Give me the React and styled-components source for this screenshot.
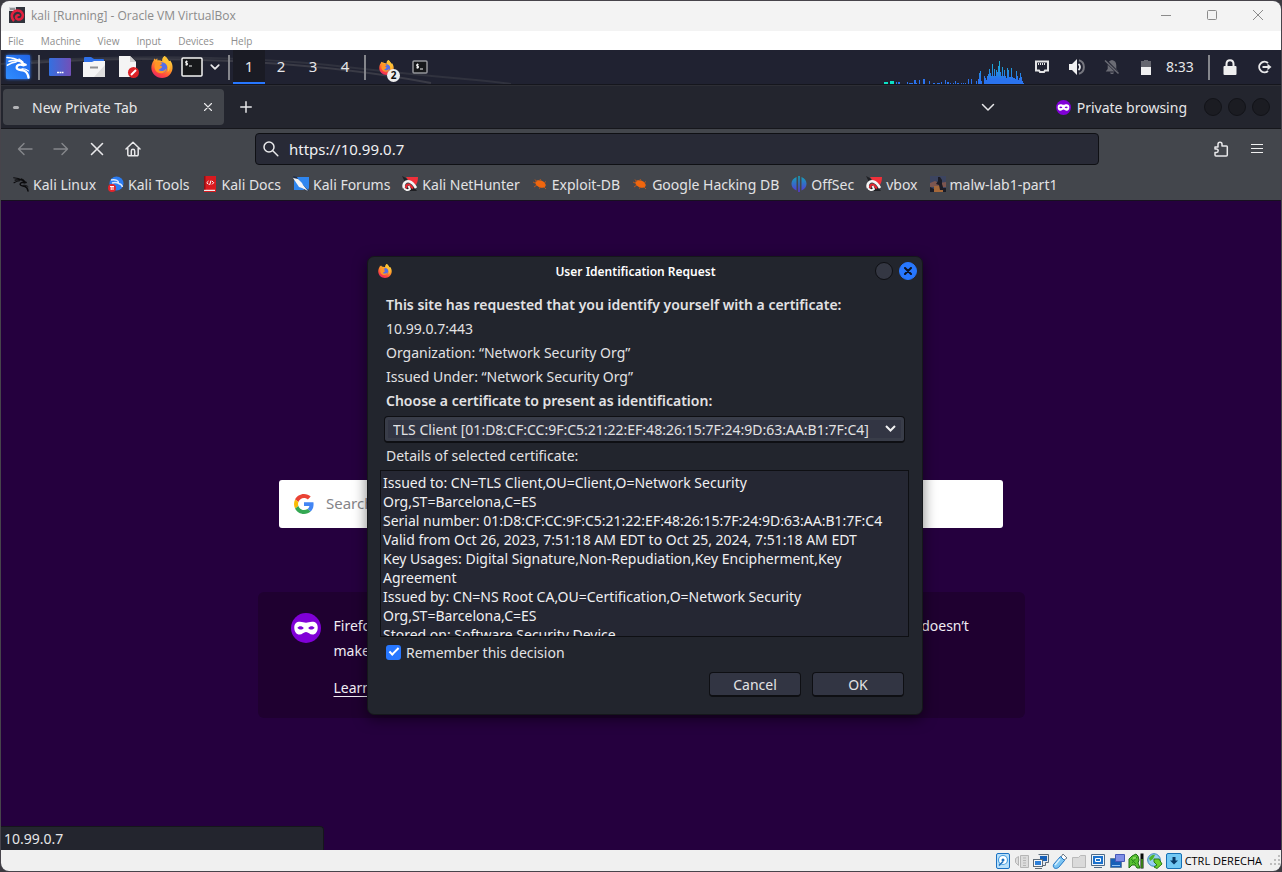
import React from "react";
import styled, { createGlobalStyle } from "styled-components";

const Global = createGlobalStyle`
  *, *::before, *::after { box-sizing: border-box; }
  html, body, #root { min-height: 100vh; }
  body {
    margin: 0;
    background: #3b3a40;
    font-family: "Noto Sans", "Open Sans", sans-serif;
    font-size: 14px;
    color: #e6e6e8;
  }
  button, input, select, textarea { font: inherit; color: inherit; margin: 0; padding: 0; border: 0; background: none; }
  svg { display: block; flex: none; }
`;

/* ---------- Host window ---------- */

const HostWindow = styled.div`
  display: flex;
  flex-direction: column;
  min-height: 100vh;
  border: 1px solid #47444b;
  border-radius: 9px;
  overflow: hidden;
  background: #222530;
`;

const HostTitle = styled.header`
  display: flex;
  align-items: center;
  height: 30px;
  padding: 0 0 2px 8px;
  background: #f3f3f3;
  color: #8b8b8b;
  font-family: "Open Sans", sans-serif;
  font-size: 12px;
`;

const HostName = styled.span`
  flex: 1;
  padding-left: 6px;
`;

const HostButton = styled.button`
  display: grid;
  place-items: center;
  width: 46px;
  height: 30px;
`;

const HostMenu = styled.nav`
  display: flex;
  align-items: center;
  gap: 17px;
  height: 19px;
  padding-left: 7px;
  background: #fff;
`;

const HostMenuItem = styled.button`
  color: #8e8e8e;
  font-family: "Open Sans", sans-serif;
  font-size: 10px;
  line-height: 16px;
`;

const HostStatus = styled.footer`
  display: flex;
  align-items: center;
  justify-content: flex-end;
  gap: 3px;
  height: 21px;
  background: #f0f0f0;
  color: #000;
  font-family: "Open Sans", sans-serif;
  font-size: 11px;
`;

const HostKey = styled.span`
  padding-right: 5px;
`;

/* ---------- Desktop panel ---------- */

const Panel = styled.div`
  position: relative;
  isolation: isolate;
  display: flex;
  align-items: center;
  height: 35px;
  background: #202231;
  border-bottom: 1px solid #15161d;
`;

const PanelArt = styled.svg`
  position: absolute;
  inset: 0;
  z-index: -1;
`;

const PanelSlot = styled.button`
  position: relative;
  display: grid;
  place-items: center;
  width: ${(p) => p.$w || 34}px;
  height: 34px;
`;

const Separator = styled.span`
  width: 2px;
  height: 25px;
  margin: 0 3px;
  background: #85868c;
`;

const Workspace = styled.button`
  width: 32px;
  height: 34px;
  font-size: 15px;
  background: ${(p) => (p.$active ? "#1a1b24" : "transparent")};
  border-bottom: 2px solid ${(p) => (p.$active ? "#2777ff" : "transparent")};
`;

const Count = styled.span`
  position: absolute;
  right: 3px;
  bottom: 2px;
  width: 13px;
  height: 13px;
  border-radius: 50%;
  background: #eee;
  color: #111;
  font-size: 10px;
  font-weight: 700;
  line-height: 13px;
  text-align: center;
`;

const Spring = styled.span`
  flex: 1;
`;

const Clock = styled.time`
  width: 42px;
  padding: 0 0 2px 3px;
`;

/* ---------- Browser ---------- */

const TabBar = styled.div`
  display: flex;
  align-items: center;
  height: 44px;
  padding: 0 11px 0 2px;
  background: #23252e;
  border-top: 1px solid #2d2e35;
  border-bottom: 1px solid #16171c;
`;

const Tab = styled.div`
  display: flex;
  align-items: center;
  width: 221px;
  height: 36px;
  padding: 0 9px 0 10px;
  border-radius: 4px;
  background: #42454b;
`;

const TabDot = styled.span`
  width: 6px;
  height: 3px;
  border-radius: 2px;
  background: #b3b4b7;
`;

const TabName = styled.span`
  flex: 1;
  padding-left: 13px;
`;

const IconButton = styled.button`
  display: grid;
  place-items: center;
  width: ${(p) => p.$w || 36}px;
  height: 36px;
  opacity: ${(p) => (p.disabled ? 0.4 : 1)};
`;

const PrivateBadge = styled.div`
  display: flex;
  align-items: center;
  gap: 6px;
  padding: 0 17px 0 50px;
`;

const RoundButtons = styled.div`
  display: flex;
  justify-content: flex-end;
  gap: 6px;
`;

const RoundButton = styled.button`
  display: grid;
  place-items: center;
  width: 18px;
  height: 18px;
  border-radius: 50%;
  border: 1px solid ${(p) => p.$border || "#121318"};
  background: ${(p) => p.$bg || "#1b1c22"};
`;

const NavBar = styled.div`
  display: flex;
  align-items: center;
  height: 41px;
  padding-bottom: 2px;
  background: #43464c;
`;

const NavLeft = styled.div`
  display: flex;
  width: 254px;
  padding-left: 6px;
`;

const NavRight = styled.div`
  display: flex;
  justify-content: flex-end;
  width: 182px;
  padding-right: 6px;
`;

const UrlBox = styled.label`
  display: flex;
  flex: 1;
  align-items: center;
  gap: 10px;
  height: 32px;
  padding: 0 7px;
  border: 1px solid #0f1014;
  border-radius: 4px;
  background: #282a36;
`;

const UrlInput = styled.input`
  flex: 1;
  min-width: 0;
  outline: 0;
  color: #f0f0f2;
  font-size: 15px;
`;

const Bookmarks = styled.nav`
  display: flex;
  align-items: center;
  gap: 12px;
  height: 31px;
  padding: 0 0 2px 12px;
  background: #43464c;
  border-bottom: 1px solid #17101f;
`;

const Bookmark = styled.a`
  display: flex;
  align-items: center;
  gap: 4px;
  color: #e2e2e4;
  text-decoration: none;
  white-space: nowrap;
`;

const Page = styled.main`
  position: relative;
  flex: 1;
  display: flex;
  flex-direction: column;
  align-items: center;
  gap: 64px;
  padding: 279px 24px 132px;
  background: #25003e;
`;

const SearchBox = styled.label`
  display: flex;
  align-items: center;
  gap: 12px;
  width: 100%;
  max-width: 724px;
  height: 48px;
  padding: 0 15px;
  border-radius: 3px;
  background: #fff;
`;

const SearchInput = styled.input`
  flex: 1;
  min-width: 0;
  padding-bottom: 2px;
  font-size: 15px;
  &::placeholder { color: #848488; opacity: 1; }
`;

const Info = styled.section`
  display: flex;
  gap: 13px;
  width: 100%;
  max-width: 767px;
  height: 126px;
  padding: 21px 38px 0 33px;
  border-radius: 6px;
  background: #1f0030;
  color: #f1edf4;
  line-height: 25px;
`;

const InfoText = styled.p`
  margin: 0 0 12px;
`;

const InfoLink = styled.a`
  color: inherit;
  text-underline-offset: 3px;
`;

const LinkStatus = styled.div`
  position: absolute;
  left: 0;
  bottom: 0;
  width: 323px;
  height: 24px;
  padding-left: 3px;
  border: 1px solid #15161b;
  border-width: 1px 1px 0 0;
  border-radius: 0 4px 0 0;
  background: #23252e;
  line-height: 24px;
`;

/* ---------- Certificate dialog ---------- */

const Dialog = styled.form`
  position: absolute;
  top: 55px;
  left: calc(50% - 273px);
  width: 556px;
  display: flex;
  flex-direction: column;
  margin-left: -1px;
  padding: 0 14px 17px 12px;
  border: 1px solid #15171b;
  border-radius: 7px;
  background: #22252d;
  box-shadow: 0 4px 14px rgba(0, 0, 0, 0.5);
  color: #e2e2e4;
`;

const DialogBar = styled.div`
  display: grid;
  grid-template-columns: 30px 1fr 54px;
  align-items: center;
  height: 28px;
  margin: 0 -9px 8px -2px;
`;

const DialogTitle = styled.h1`
  margin: 0;
  color: #fff;
  font-size: 12px;
  font-weight: 600;
  text-align: center;
`;

const Line = styled.div`
  padding-left: 6px;
  font-weight: ${(p) => (p.$strong ? 600 : 400)};
  line-height: 24px;
`;

const PickerWrap = styled.div`
  position: relative;
  margin: 3px 3px 1px 4px;
`;

const Picker = styled.select`
  display: block;
  width: 100%;
  height: 27px;
  padding: 0 24px 0 8px;
  border: 1px solid #0e0f13;
  border-bottom-width: 2px;
  border-radius: 4px;
  background: #323543;
  box-shadow: inset 0 0 0 3px #393d49;
  appearance: none;
`;

const PickerArrow = styled.svg`
  position: absolute;
  right: 9px;
  top: 9px;
  pointer-events: none;
`;

const Details = styled.textarea`
  display: block;
  height: 167px;
  margin: 2px -1px 0 0;
  padding: 2px 10px 0 2px;
  border: 1px solid #0e0f13;
  background: #252733;
  color: #f0f0f2;
  line-height: 19px;
  overflow: hidden;
  resize: none;
`;

const CheckRow = styled.label`
  display: flex;
  align-items: center;
  gap: 5px;
  height: 24px;
  margin: 3px 0 8px;
  padding-left: 6px;
`;

const Check = styled.input`
  width: 15px;
  height: 15px;
  border-radius: 3px;
  appearance: none;
  background: #2777ff;
  display: grid;
  place-items: center;
  &::after {
    content: "";
    width: 10px;
    height: 5px;
    border: solid #fff;
    border-width: 0 0 2px 2px;
    rotate: -45deg;
    margin-bottom: 3px;
  }
`;

const Actions = styled.div`
  display: flex;
  justify-content: flex-end;
  gap: 11px;
  padding-right: 4px;
`;

const ActionButton = styled.button`
  width: 92px;
  height: 25px;
  border: 1px solid #0e0f13;
  border-bottom-width: 2px;
  border-radius: 4px;
  background: #323543;
`;

/* ---------- Icons ---------- */

const Firefox = ({ size = 22 }) => (
  <svg width={size} height={size} viewBox="0 0 24 24">
    <defs>
      <linearGradient id={"ff" + size} x1="0.8" y1="0" x2="0.25" y2="1">
        <stop offset="0" stopColor="#ffe14a" />
        <stop offset="0.45" stopColor="#ff9a28" />
        <stop offset="0.75" stopColor="#ff4a3c" />
        <stop offset="1" stopColor="#e62368" />
      </linearGradient>
    </defs>
    <path fill={"url(#ff" + size + ")"} d="M14.7 0c3 1.700 3.600 3.700 4.800 5.200.9.700 1.200.3 1.500-.2 1.800 2.500 2.700 5 2.500 8.300C23.100 19.300 18.200 24 12 24 5.700 24 .5 19.400.4 12.900.4 9.800 1.300 7 3 4.800l.4-2.200 2 1.500 1.300-1.700.5 2.400c2.100-.4 3.800.1 5 .9C11.800 3.600 12.800 1.200 14.700 0z" />
    <circle cx="12" cy="12.500" r="5.700" fill="#536ee8" />
    <path fill="#ff9626" d="M5.200 7.200c2.300-1.500 5.400-.8 7 1.500l-2.800 1.500 2.800 1.300c-.3 2.300-2.900 2.500-3.900 3.900 2.500 2.100 6.500.8 8.500-1.900-.4 5.600-8.600 7.200-11.900 2.200C3.300 13 3.500 9.500 5.200 7.200z" />
    <path fill="#ffc233" d="M14.700 0c3 1.700 3.600 4.700 5.300 7.700 1.500 3 .8 7.300-1.800 9.900 1.200-4.500 0-7.900-2.600-9.900C13.500 6 13.100 3 14.700 0z" />
  </svg>
);

const Dragon = ({ color = "#fff", size = 24 }) => (
  <svg width={size} height={size} viewBox="0 0 24 24" fill="none" stroke={color} strokeLinecap="round" strokeLinejoin="round">
    <path strokeWidth="1.600" d="M1 2.500c4.500.3 8.500 1 11.500 3M3 6.200c3.400-.9 6.500-1.100 9.500-.3M1.500 10.200c2.800-2 5.500-3 8.500-3.200" />
    <path strokeWidth="2.300" d="M12 5.400c2.300.4 4 1.600 5.200 3.300l2.500 1-2.500.6c-3-1.600-6.700-.2-6.500 2.500.3 2.500 4.500 1.800 7.300 2.900 2.900 1.100 4 3.500 4.500 6.800" />
    <path strokeWidth="1.200" d="M16 13.800c2.600-.2 4.600.6 6.500 2.100M13 4l4 3" />
  </svg>
);

const KaliTile = () => (
  <svg width="30" height="30" viewBox="0 0 30 30">
    <defs>
      <linearGradient id="kt" x1="0" y1="1" x2="1" y2="0">
        <stop offset="0" stopColor="#2f8dff" />
        <stop offset="1" stopColor="#2165e8" />
      </linearGradient>
      <filter id="glow" x="-30%" y="-30%" width="160%" height="160%"><feGaussianBlur stdDeviation="1.500" /></filter>
    </defs>
    <rect x="3" y="3" width="24" height="24" rx="2" fill="#2777ff" filter="url(#glow)" />
    <rect x="3" y="3" width="24" height="24" rx="1" fill="url(#kt)" />
    <g transform="translate(3 3)"><Dragon /></g>
  </svg>
);

const Terminal = ({ w = 22, h = 20, border = "#f4f4f4" }) => (
  <svg width={w} height={h} viewBox={`0 0 ${w} ${h}`} fill="none">
    <rect x="1" y="1" width={w - 2} height={h - 2} rx="1" fill="#17181b" stroke={border} strokeWidth="1.500" />
    <path d="M6.500 4.500H4.700v1.700h1.800v1.600H4.300M5.600 3.500v5M8 9h3" stroke="#f4f4f4" />
  </svg>
);

const Mask = ({ size }) => (
  <svg width={size} height={size} viewBox="0 0 32 32">
    <circle cx="16" cy="16" r="16" fill="#8000d7" />
    <path fill="#fff" d="M3.500 15.500c0-4.200 2.200-6.200 6-6.200 2.800 0 4.500 1 6.500 1s3.700-1 6.500-1c3.800 0 6 2 6 6.200 0 4.500-2.200 7.500-5.600 7.500-3 0-4.300-2.800-6.900-2.800S12.100 23 9.100 23c-3.400 0-5.600-3-5.600-7.500z" />
    <path fill="#7d05d6" d="M6.800 15.700c1.600-2.300 5-2.300 6.800.3-1.600 2.300-5.400 2.100-6.800-.3zM25.200 15.700c-1.600-2.300-5-2.300-6.800.3 1.600 2.300 5.400 2.100 6.800-.3z" />
  </svg>
);

const Google = () => (
  <svg width="20" height="20" viewBox="0 0 48 48">
    <path fill="#EA4335" d="M24 9.500c3.540 0 6.710 1.220 9.210 3.600l6.850-6.850C35.900 2.380 30.470 0 24 0 14.620 0 6.510 5.380 2.560 13.220l7.980 6.190C12.430 13.720 17.740 9.500 24 9.500z" />
    <path fill="#4285F4" d="M46.980 24.550c0-1.570-.15-3.090-.38-4.550H24v9.020h12.940c-.58 2.960-2.260 5.480-4.780 7.180l7.730 6c4.510-4.180 7.090-10.360 7.090-17.650z" />
    <path fill="#FBBC05" d="M10.530 28.590c-.48-1.450-.76-2.990-.76-4.590s.27-3.140.76-4.590l-7.980-6.190C.92 16.460 0 20.120 0 24c0 3.880.92 7.540 2.560 10.780l7.970-6.190z" />
    <path fill="#34A853" d="M24 48c6.480 0 11.930-2.130 15.890-5.810l-7.730-6c-2.150 1.450-4.920 2.300-8.160 2.300-6.260 0-11.570-4.220-13.470-9.910l-7.980 6.190C6.510 42.620 14.620 48 24 48z" />
  </svg>
);

const Stroke = ({ size = 16, d, color = "#e8e8ea", sw = 1.5, children, ...rest }) => (
  <svg width={size} height={size} viewBox="0 0 16 16" fill="none" stroke={color} strokeWidth={sw} strokeLinecap="round" strokeLinejoin="round" {...rest}>
    {d && <path d={d} />}
    {children}
  </svg>
);

const NetHunter = () => (
  <svg width="16" height="16" viewBox="0 0 16 16">
    <path fill="#f0303a" d="M4 1h12c0 4-1 7-3 9L7 5z" />
    <path fill="#1f2024" d="M0 0l4 2 2 3-3 1zM1 12l2 3h8l4 0-3-4z" />
    <path fill="none" stroke="#f5f5f5" strokeWidth="2.600" d="M2 12c-1.500-4 1.500-7.500 5.500-6.500 3 .8 4.500 3 6.500 6.500" />
    <path fill="none" stroke="#e8262f" strokeWidth="2" d="M4.500 12.500c-1.500-3 1.500-5 3.500-3.500l3 3.500" />
    <path fill="none" stroke="#f5f5f5" strokeWidth="1.800" d="M2 12c1 2 4 3 6 1L6.500 10" />
  </svg>
);

const Bug = () => (
  <svg width="16" height="16" viewBox="0 0 16 16">
    <ellipse cx="8.500" cy="8" rx="5.500" ry="3.400" transform="rotate(22 8.500 8)" fill="#f0660e" />
    <path d="M5 6L3 3.500M9 5L8 3M3 7L1 6M5 9l-3 2M9 11l-2 1.500M12 7l2-1.500M12 11l2 2" stroke="#b9561c" strokeWidth="1" />
  </svg>
);

const bookmarks = [
  { name: "Kali Linux", icon: <Dragon color="#0c0c0e" size={16} /> },
  {
    name: "Kali Tools",
    icon: (
      <svg width="16" height="16" viewBox="0 0 16 16">
        <circle cx="8.500" cy="7.500" r="7" fill="#2b7cf2" />
        <path d="M3 4c5-1 8 1 7.500 3.500 2 .3 3.500 1.500 4 3.500M4 7c3-1 5-.5 6.500.5" stroke="#d8e6fb" strokeWidth="1.400" fill="none" />
        <circle cx="4" cy="12" r="4" fill="#e3242b" />
        <path d="M2 10.500h4M3.200 10.500v3.500M5 10.500v3.500" stroke="#fff" fill="none" />
      </svg>
    ),
  },
  {
    name: "Kali Docs",
    icon: (
      <svg width="16" height="16" viewBox="0 0 16 16">
        <path fill="#d91a1f" d="M2 0h12v16H2z" />
        <path fill="#f3e9e9" d="M2 13.800h11v1.200H2z" />
        <path fill="#8d1115" d="M2 0h1.500v13.500H2z" />
        <path d="M6.500 5L4.800 6.700 6.500 8.400M10 5l1.700 1.700L10 8.400M9 4.500L7.600 9" stroke="#fff" fill="none" />
      </svg>
    ),
  },
  {
    name: "Kali Forums",
    icon: (
      <svg width="16" height="16" viewBox="0 0 16 16">
        <path fill="#2f86ef" d="M2 1h14v11l-1 2H1V6z" />
        <path fill="#1c2c4a" d="M0 0l4 1 2 4-3 1zM10 9l6 6-5-1z" />
        <path fill="#f2f4f7" d="M0 2l5 1 4 4 1 2 5 6-6-3-3-1-2-3z" />
      </svg>
    ),
  },
  { name: "Kali NetHunter", icon: <NetHunter /> },
  { name: "Exploit-DB", icon: <Bug /> },
  { name: "Google Hacking DB", icon: <Bug /> },
  {
    name: "OffSec",
    icon: (
      <svg width="16" height="16" viewBox="0 0 16 16">
        <defs>
          <linearGradient id="os" x1="0" y1="0" x2="0" y2="1">
            <stop offset="0" stopColor="#12a5b8" />
            <stop offset="1" stopColor="#5636d8" />
          </linearGradient>
        </defs>
        <path fill="url(#os)" d="M5.500 1v13.500C-1.200 12-1.200 3.500 5.500 1zM7.200 0h1.600v16H7.200zM10.500 1v13.500C17.200 12 17.200 3.500 10.500 1z" />
      </svg>
    ),
  },
  { name: "vbox", icon: <NetHunter /> },
  {
    name: "malw-lab1-part1",
    icon: (
      <svg width="16" height="16" viewBox="0 0 16 16">
        <path fill="#3c4460" d="M0 0h16v16H0z" />
        <path fill="#7d5650" d="M0 7l5-2 4 2 7-1v5H0z" />
        <path fill="#a5683a" d="M4 10h9v6H4z" />
        <path fill="#1c1c26" d="M8 1h2l2 3v4l1 3v3h-3l-1-5-3-1 2-3zM0 11l4 2v3H0zM13 12h3v4h-3z" />
      </svg>
    ),
  },
];

const activity = [
  [0, 2], [1, 2], [2, 2], [3, 2], [6, 3], [7, 3], [8, 3], [9, 3], [12, 2], [14, 2], [15, 2], [23, 2], [25, 1], [26, 1], [27, 1], [28, 1],
  [30, 4], [31, 4], [32, 1], [35, 4], [39, 5], [40, 5], [45, 3], [49, 1], [50, 1], [53, 1], [54, 1], [55, 1], [57, 2], [61, 4], [63, 2], [64, 2],
  [66, 1], [69, 1], [71, 3], [73, 1], [74, 1], [77, 1], [79, 1], [81, 1], [84, 5], [87, 5], [92, 3], [94, 5], [95, 11], [96, 13], [97, 3],
  [100, 8], [101, 6], [102, 4], [103, 8], [104, 10], [105, 15], [106, 11], [107, 8], [108, 20], [109, 8], [110, 15], [111, 8], [112, 14], [113, 12],
  [114, 18], [115, 23], [116, 12], [117, 8], [118, 17], [119, 8], [120, 14], [121, 8], [122, 6], [123, 16], [124, 14], [125, 7], [126, 7], [127, 16],
  [128, 7], [129, 6], [130, 6], [131, 5], [132, 13], [133, 8], [134, 4], [135, 6], [136, 11], [137, 7], [138, 3], [139, 1],
];

const Activity = () => (
  <svg width="140" height="34" viewBox="0 0 140 34" shapeRendering="crispEdges">
    <defs>
      <linearGradient id="act" gradientUnits="userSpaceOnUse" x1="0" y1="34" x2="0" y2="11">
        <stop offset="0.200" stopColor="#2a73ee" />
        <stop offset="1" stopColor="#17b5cf" />
      </linearGradient>
    </defs>
    {activity.map(([x, h]) => (
      <rect key={x} x={x} y={34 - h} width="1" height={h} fill={x < 10 ? "#0de0c4" : "url(#act)"} />
    ))}
  </svg>
);

const StatusIcons = () => (
  <>
    <svg width="16" height="16" viewBox="0 0 16 16">
      <rect x="1.500" y="0.500" width="13" height="15" rx="1.500" fill="#b9e0fa" stroke="#1b72c4" />
      <circle cx="8" cy="7" r="4.500" fill="#fff" stroke="#4a9fe0" strokeWidth="1.200" />
      <circle cx="8" cy="7" r="1.500" fill="#1d70bd" />
      <path d="M4 12.500l4-4" stroke="#1d70bd" strokeWidth="1.600" />
    </svg>
    <svg width="16" height="16" viewBox="0 0 16 16" fill="#dcdcdc" stroke="#b5b5b5">
      <path d="M6.500 2.500h8v12h-8zM4.500 3.500v9l-3-3v-4z" /><path d="M9 5h3M9 7.500h3M9 10h3M9 12.500h3" />
    </svg>
    <svg width="16" height="16" viewBox="0 0 16 16">
      <path d="M5.500 1.500h10v8h-3v3h-3" fill="#e3e8ee" stroke="#5e6b78" /><path d="M7 3h7v5H7z" fill="#1660b8" />
      <rect x="0.500" y="6.500" width="9" height="7" fill="#f5f7fa" stroke="#5e6b78" /><path d="M2 8h6v4H2z" fill="#2c7fd8" /><path d="M2 15.500h7" stroke="#5e6b78" />
    </svg>
    <svg width="16" height="16" viewBox="0 0 16 16">
      <path d="M11 1l4 4-3 2-3-3z" fill="#fff" stroke="#6a7888" /><path d="M8.500 3.500l4 4-6 7c-3 2-6 .5-5-3z" fill="#7cc4f2" stroke="#1b72c4" /><path d="M8 6l-5 6" stroke="#d6effe" strokeWidth="1.500" />
    </svg>
    <svg width="16" height="16" viewBox="0 0 16 16"><path d="M1.500 14.500V4.500h6l2-2h5v12z" fill="#dadada" stroke="#b9b9b9" /></svg>
    <svg width="16" height="16" viewBox="0 0 16 16">
      <path d="M1.500 1.500h13v11h-13z" fill="#eef4fa" stroke="#4f6b88" /><path d="M4 14.500h8" stroke="#4f6b88" /><path d="M3 3h10v8H3z" fill="#1c72cd" /><path d="M5.500 5.500h5v3h-5z" fill="#1c72cd" stroke="#fff" />
    </svg>
    <svg width="16" height="16" viewBox="0 0 16 16">
      <path d="M1.500 5.500h11v9h-11z" fill="#1660b8" stroke="#6180a0" /><path d="M6.500 1.500h9v7h-9z" fill="#7f8fe6" stroke="#4658b8" /><path d="M3 12.500h8" stroke="#8dc1f5" />
    </svg>
    <svg width="16" height="16" viewBox="0 0 16 16">
      <path d="M12.500 0.500h3v15h-3z" fill="#0a0a0a" /><path d="M13.500 6h1v9h-1z" fill="#63f020" />
      <path d="M1 6l3-3 4-2 2 2 1 4-1 3 2 5H9l-2-3-3 0-3 3V11z" fill="#56c030" stroke="#1f6c14" /><path d="M3 6l5 5M9 4L4 10" stroke="#2a8a1c" /><path d="M5 5h3" stroke="#b6f08c" />
    </svg>
    <svg width="16" height="16" viewBox="0 0 16 16">
      <circle cx="7" cy="7" r="6.300" fill="#96ceef" stroke="#3485be" /><path d="M2 5c2-3 5-4 6-3L6 6l-3 2z" fill="#4eb52b" />
      <path d="M7 6l5 0 3 5-5 4.500-3-1.500 3-2-3-3z" fill="#6cd02c" stroke="#2a7a14" />
    </svg>
    <svg width="16" height="16" viewBox="0 0 16 16">
      <rect x="0.500" y="0.500" width="15" height="15" rx="1.500" fill="#72c8f4" stroke="#1570b4" /><path d="M6.500 4h3v3.500H12l-4 4-4-4h2.500z" fill="#083a68" />
    </svg>
  </>
);

const certificate = `Issued to: CN=TLS Client,OU=Client,O=Network Security Org,ST=Barcelona,C=ES
Serial number: 01:D8:CF:CC:9F:C5:21:22:EF:48:26:15:7F:24:9D:63:AA:B1:7F:C4
Valid from Oct 26, 2023, 7:51:18 AM EDT to Oct 25, 2024, 7:51:18 AM EDT
Key Usages: Digital Signature,Non-Repudiation,Key Encipherment,Key Agreement
Issued by: CN=NS Root CA,OU=Certification,O=Network Security Org,ST=Barcelona,C=ES
Stored on: Software Security Device`;

export default function App() {
  return (
    <>
      <Global />
      <HostWindow>
        <HostTitle>
          <svg width="16" height="16" viewBox="0 0 16 16">
            <path fill="#30343d" d="M0 0h16v16H0z" /><path fill="#cfd1d6" d="M0 0h7v4H0z" /><path d="M1 2h5" stroke="#555" />
            <path fill="none" stroke="#e3213f" strokeWidth="2.600" d="M5 14C1 10 3 4 8 3.500c5-.3 7.500 5 4.500 8-2.500 2.200-6 .5-5.300-2 .4-1.500 2.300-1.500 2.800-.5" />
          </svg>
          <HostName>kali [Running] - Oracle VM VirtualBox</HostName>
          <HostButton aria-label="Minimize"><svg width="10" height="10" stroke="#8b8b8b"><path d="M0 5.500h10" /></svg></HostButton>
          <HostButton aria-label="Maximize"><svg width="10" height="10" stroke="#8b8b8b" fill="none"><rect x="0.500" y="0.500" width="9" height="9" rx="1" /></svg></HostButton>
          <HostButton aria-label="Close"><svg width="10" height="10" stroke="#8b8b8b"><path d="M0 0l10 10M10 0L0 10" /></svg></HostButton>
        </HostTitle>
        <HostMenu aria-label="Virtual machine">
          {["File", "Machine", "View", "Input", "Devices", "Help"].map((m) => <HostMenuItem key={m}>{m}</HostMenuItem>)}
        </HostMenu>

        <Panel>
          <PanelArt width="100%" height="34" fill="none" aria-hidden="true">
            <path d="M0 14C90 5 230 4 345 17s130 12 165 17" stroke="#30323e" strokeWidth="2" />
            <path d="M30 13C150 4 310 10 430 33" stroke="#3a3b46" strokeWidth="2" />
          </PanelArt>
          <PanelSlot aria-label="Applications"><KaliTile /></PanelSlot>
          <Separator />
          <PanelSlot aria-label="Show desktop">
            <svg width="22" height="18" viewBox="0 0 22 18">
              <defs><linearGradient id="dk"><stop offset="0" stopColor="#3470e0" /><stop offset="1" stopColor="#7250b8" /></linearGradient></defs>
              <rect width="22" height="18" rx="1" fill="url(#dk)" /><path d="M8 14.500h2M10.500 14.500h2M13 14.500h1.500" stroke="#fff" strokeWidth="1.500" />
            </svg>
          </PanelSlot>
          <PanelSlot aria-label="Files">
            <svg width="22" height="20" viewBox="0 0 22 20">
              <path fill="#2f70e8" d="M1 6V1a1 1 0 0 1 1-1h6l3 2h9a1 1 0 0 1 1 1v3z" /><path fill="#f5f5f5" d="M0 5h9l2-1h11v16H0z" /><path fill="#dedede" d="M22 8v12H11z" /><path d="M7 10.500h8" stroke="#8f9093" strokeWidth="2" />
            </svg>
          </PanelSlot>
          <PanelSlot aria-label="Text editor">
            <svg width="21" height="22" viewBox="0 0 21 22">
              <path fill="#f4f4f4" d="M1 0h11l6 6v15H1z" /><path fill="#cfcfcf" d="M12 0l6 6h-6z" /><circle cx="15.500" cy="16.500" r="5.500" fill="#dd2328" /><path d="M13 19l5-5" stroke="#fff" strokeWidth="2" />
            </svg>
          </PanelSlot>
          <PanelSlot aria-label="Firefox"><Firefox size={22} /></PanelSlot>
          <PanelSlot $w={26} aria-label="Terminal"><Terminal /></PanelSlot>
          <PanelSlot $w={20} aria-label="More terminals"><Stroke size={10} sw={2.800} d="M2 5l6 6 6-6" /></PanelSlot>
          <Separator />
          {[1, 2, 3, 4].map((n) => <Workspace key={n} $active={n === 1}>{n}</Workspace>)}
          <Separator />
          <PanelSlot aria-label="Firefox windows"><Firefox size={15} /><Count>2</Count></PanelSlot>
          <PanelSlot aria-label="Terminal window"><Terminal w={16} h={14} border="#94959a" /></PanelSlot>
          <Spring />
          <Activity />
          <PanelSlot $w={35} aria-label="Network">
            <svg width="16" height="14" viewBox="0 0 16 14" fill="none" stroke="#e4e4e6">
              <path strokeWidth="2" d="M2 1.500h12v9h-3l-1 1.500H6L5 10.500H2z" /><path d="M4.500 3v2M6.500 3v2M8.500 3v2M10.500 3v2" />
            </svg>
          </PanelSlot>
          <PanelSlot $w={35} aria-label="Volume">
            <svg width="18" height="16" viewBox="0 0 18 16" fill="none">
              <path fill="#f0f0f1" d="M1 5h3l5-5v16l-5-5H1z" /><path stroke="#f0f0f1" strokeWidth="1.800" d="M10.500 5c2 1.500 2 4.500 0 6" /><path stroke="#75767e" strokeWidth="2" d="M11 1.200c6.500 2 6.500 11.600 0 13.600" />
            </svg>
          </PanelSlot>
          <PanelSlot $w={35} aria-label="Notifications">
            <svg width="16" height="16" viewBox="0 0 16 16">
              <path fill="#6a6b74" d="M8 1c3 .5 4.300 2.500 4.300 5.500V10l2 2.500H1.700l2-2.500V6.500C3.700 3.500 5 1.500 8 1zM6 13.500h4c-.5 2-3.500 2-4 0z" /><path d="M1 1l14 14" stroke="#202231" strokeWidth="3" /><path d="M1 1.500l13.500 13" stroke="#6a6b74" strokeWidth="1.500" />
            </svg>
          </PanelSlot>
          <PanelSlot $w={34} aria-label="Battery">
            <svg width="10" height="15" viewBox="0 0 10 15"><path fill="#65666f" d="M0 1h3V0h4v1h3v7H0z" /><path fill="#f0f0f1" d="M0 7h10v8H0z" /></svg>
          </PanelSlot>
          <Clock>8:33</Clock>
          <Separator />
          <PanelSlot aria-label="Lock">
            <svg width="14" height="16" viewBox="0 0 14 16"><rect x="0.500" y="7" width="13" height="9" rx="1" fill="#efefef" /><path d="M3.500 8V5C3.500 0 10.500 0 10.500 5v3" fill="none" stroke="#efefef" strokeWidth="2" /></svg>
          </PanelSlot>
          <PanelSlot aria-label="Log out">
            <svg width="15" height="14" viewBox="0 0 15 14" fill="none" stroke="#e8e8ea" strokeWidth="2"><path d="M11 3a5.300 5.300 0 1 0 0 8M5.500 7H13" /><path d="M10.500 3.800L14.500 7l-4 3.200z" fill="#e8e8ea" stroke="none" /></svg>
          </PanelSlot>
        </Panel>

        <TabBar>
          <Tab>
            <TabDot />
            <TabName>New Private Tab</TabName>
            <IconButton $w={14} aria-label="Close tab"><Stroke size={14} sw={1.300} d="M4 4l8 8M12 4l-8 8" /></IconButton>
          </Tab>
          <IconButton $w={44} aria-label="New tab"><Stroke size={14} sw={1.700} d="M8 2v12M2 8h12" /></IconButton>
          <Spring />
          <IconButton aria-label="List all tabs"><Stroke size={16} sw={1.500} d="M2.500 5.500L8 11l5.500-5.500" /></IconButton>
          <PrivateBadge><Mask size={15} />Private browsing</PrivateBadge>
          <RoundButtons>
            <RoundButton aria-label="Minimize window" />
            <RoundButton aria-label="Maximize window" />
            <RoundButton aria-label="Close window" />
          </RoundButtons>
        </TabBar>
        <NavBar>
          <NavLeft>
            <IconButton disabled aria-label="Back"><Stroke sw={1.400} d="M15 8H2M7 2.500L1.500 8 7 13.500" /></IconButton>
            <IconButton disabled aria-label="Forward"><Stroke sw={1.400} d="M1 8h13M9 2.500L14.500 8 9 13.500" /></IconButton>
            <IconButton aria-label="Stop"><Stroke sw={1.600} d="M2.500 2.500l11 11M13.500 2.500l-11 11" /></IconButton>
            <IconButton $w={35} aria-label="Home"><Stroke sw={1.500} d="M1 8l7-6.800L15 8M2.800 7v6.500a1.200 1.200 0 0 0 1.200 1.200h8a1.200 1.200 0 0 0 1.200-1.200V7M6.300 14.500V10a1.700 1.700 0 0 1 3.400 0v4.500" /></IconButton>
          </NavLeft>
          <UrlBox aria-label="Address">
            <Stroke sw={1.500}><circle cx="6" cy="6" r="5" /><path d="M9.800 9.800l5 5" /></Stroke>
            <UrlInput defaultValue="https://10.99.0.7" />
          </UrlBox>
          <NavRight>
            <IconButton aria-label="Extensions"><Stroke sw={1.500} d="M2 6h3V3.300a2 2 0 0 1 4 0V5h4.500a.8.800 0 0 1 .8.800V14a1 1 0 0 1-1 1H3a1 1 0 0 1-1-1v-2.500h1.500a1.700 1.700 0 0 0 0-3.400H2z" /></IconButton>
            <IconButton aria-label="Menu"><svg width="12" height="11" stroke="#f0f0f0"><path d="M0 1.500h12M0 5.500h12M0 9.500h12" /></svg></IconButton>
          </NavRight>
        </NavBar>
        <Bookmarks aria-label="Bookmarks">
          {bookmarks.map((b) => <Bookmark key={b.name} href="#">{b.icon}{b.name}</Bookmark>)}
        </Bookmarks>

        <Page>
          <SearchBox aria-label="Search">
            <Google />
            <SearchInput placeholder="Search with Google or enter address" />
          </SearchBox>
          <Info>
            <Mask size={30} />
            <div>
              <InfoText>Firefox clears your search and browsing history when you close all Private Windows.{"\u00a0"} This doesn’t make you anonymous.</InfoText>
              <InfoLink href="#">Learn more</InfoLink>
            </div>
          </Info>
          <LinkStatus>10.99.0.7</LinkStatus>

          <Dialog role="dialog" aria-labelledby="cert-title" onSubmit={(e) => e.preventDefault()}>
            <DialogBar>
              <Firefox size={14} />
              <DialogTitle id="cert-title">User Identification Request</DialogTitle>
              <RoundButtons>
                <RoundButton type="button" aria-label="Maximize dialog" $bg="#343743" $border="#0e0f13" />
                <RoundButton type="button" aria-label="Close dialog" $bg="#2777ff" $border="#2777ff">
                  <Stroke size={8} sw={4} color="#0c1120" d="M2 2l12 12M14 2L2 14" />
                </RoundButton>
              </RoundButtons>
            </DialogBar>
            <Line $strong>This site has requested that you identify yourself with a certificate:</Line>
            <Line>10.99.0.7:443</Line>
            <Line>Organization: “Network Security Org”</Line>
            <Line>Issued Under: “Network Security Org”</Line>
            <Line as="label" htmlFor="cert" $strong>Choose a certificate to present as identification:</Line>
            <PickerWrap>
              <Picker id="cert"><option>TLS Client [01:D8:CF:CC:9F:C5:21:22:EF:48:26:15:7F:24:9D:63:AA:B1:7F:C4]</option></Picker>
              <PickerArrow width="11" height="8" fill="none" stroke="#f0f0f2" strokeWidth="2"><path d="M1 1l4.500 4.500L10 1" /></PickerArrow>
            </PickerWrap>
            <Line as="label" htmlFor="details">Details of selected certificate:</Line>
            <Details id="details" readOnly value={certificate} />
            <CheckRow><Check type="checkbox" defaultChecked />Remember this decision</CheckRow>
            <Actions>
              <ActionButton type="button">Cancel</ActionButton>
              <ActionButton type="submit">OK</ActionButton>
            </Actions>
          </Dialog>
        </Page>

        <HostStatus>
          <StatusIcons />
          <HostKey>CTRL DERECHA</HostKey>
          <svg width="11" height="11" fill="#bdbdbd"><path d="M8 0h2v2H8zM4 4h2v2H4zM8 4h2v2H8zM0 8h2v2H0zM4 8h2v2H4zM8 8h2v2H8z" /></svg>
        </HostStatus>
      </HostWindow>
    </>
  );
}
